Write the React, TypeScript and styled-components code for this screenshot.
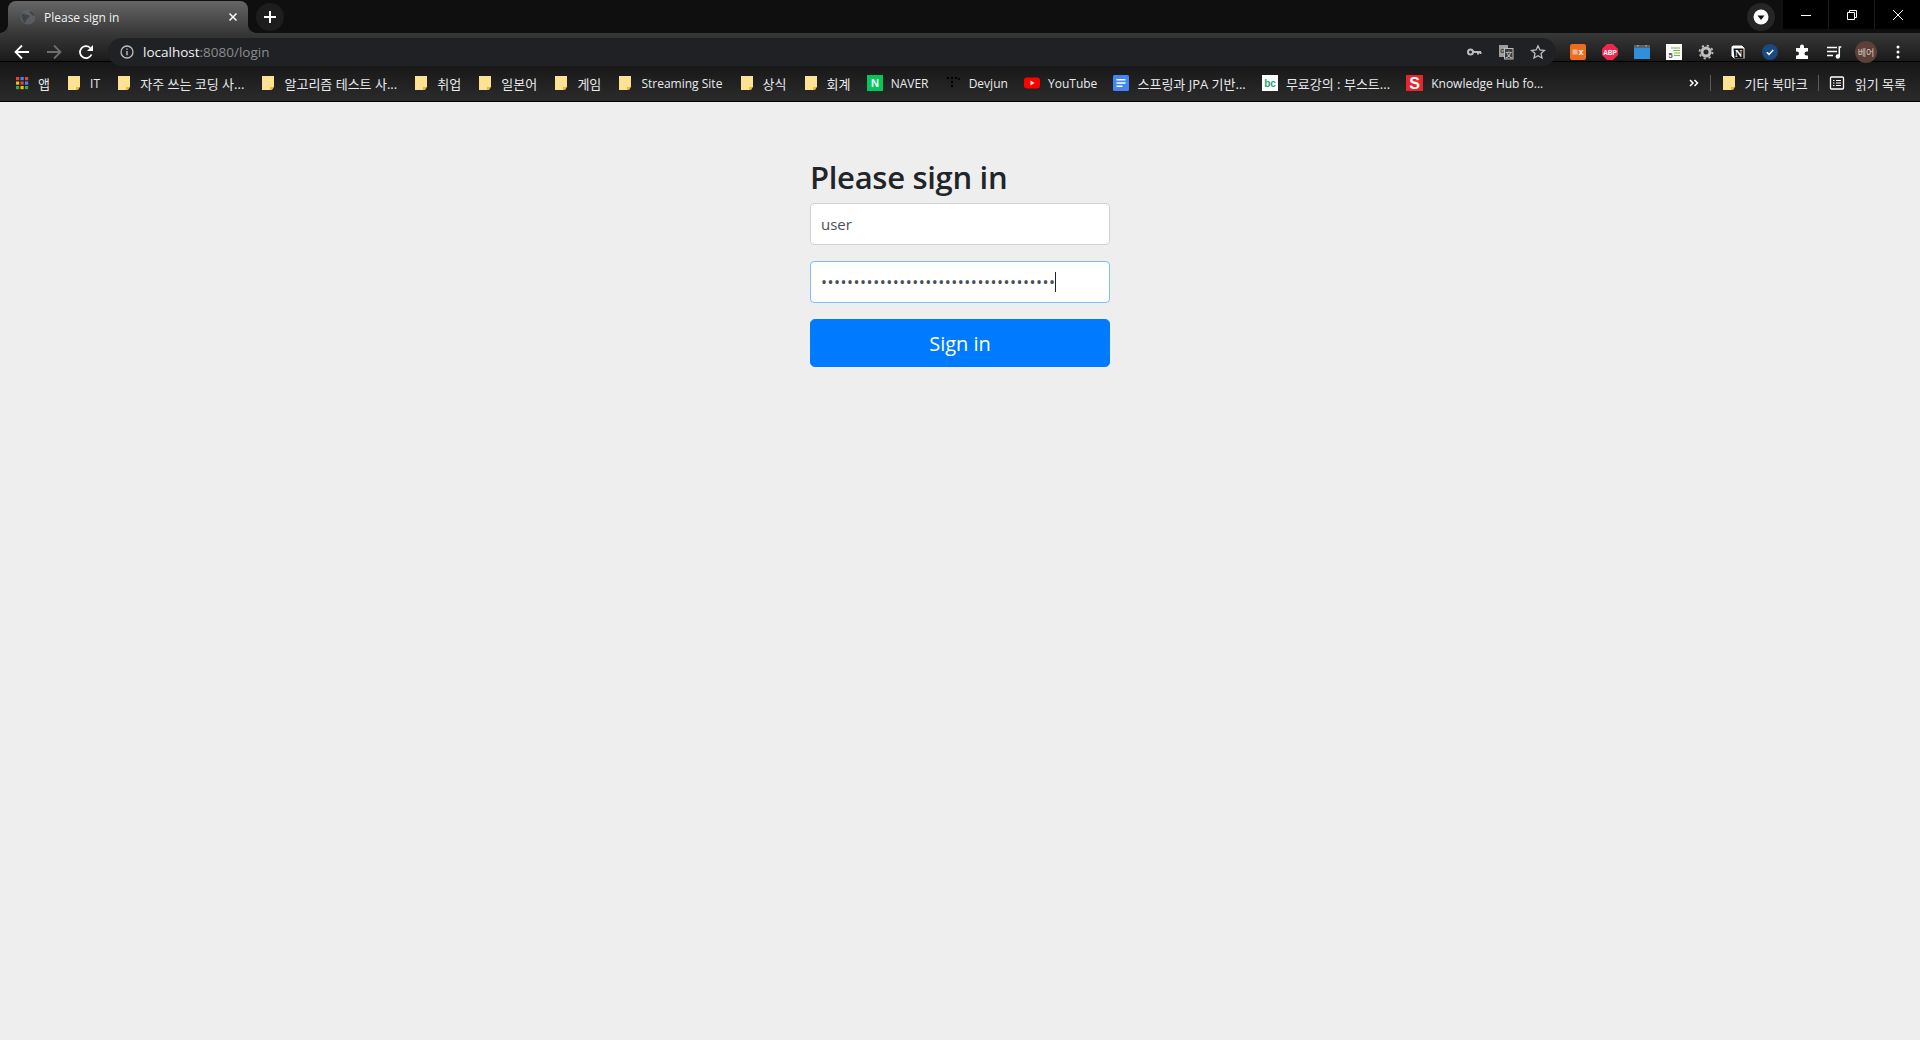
import React from 'react';
import styled, { createGlobalStyle } from 'styled-components';

const UI_FONT = `"Open Sans", "Noto Sans CJK KR", sans-serif`;

const GlobalStyle = createGlobalStyle`
  html, body {
    margin: 0;
    padding: 0;
    background: #eeeeee;
  }
  * {
    box-sizing: border-box;
  }
`;

const bookmarks: { icon: string; label: string }[] = [
  { icon: 'apps', label: '앱' },
  { icon: 'folder', label: 'IT' },
  { icon: 'folder', label: '자주 쓰는 코딩 사...' },
  { icon: 'folder', label: '알고리즘 테스트 사...' },
  { icon: 'folder', label: '취업' },
  { icon: 'folder', label: '일본어' },
  { icon: 'folder', label: '게임' },
  { icon: 'folder', label: 'Streaming Site' },
  { icon: 'folder', label: '상식' },
  { icon: 'folder', label: '회계' },
  { icon: 'naver', label: 'NAVER' },
  { icon: 'devjun', label: 'Devjun' },
  { icon: 'youtube', label: 'YouTube' },
  { icon: 'docs', label: '스프링과 JPA 기반...' },
  { icon: 'bc', label: '무료강의 : 부스트...' },
  { icon: 'slogo', label: 'Knowledge Hub fo...' },
];

const isKorean = (text: string) => /[가-힣]/.test(text);

const FolderIcon = () => (
  <svg width="16" height="16" viewBox="0 0 16 16">
    <path d="M2 1h10v11l-2 3H2z" fill="#fde293" />
    <path d="M10 15v-3h4l-2 3z" fill="#e8b93f" />
    <path d="M12 1h2v11h-2z" fill="#fde293" />
  </svg>
);

const AppsIcon = () => {
  const colors = ['#ea4335', '#4285f4', '#ea4335', '#fbbc04', '#ea4335', '#4285f4', '#34a853', '#fbbc04', '#34a853'];
  return (
    <svg width="16" height="16" viewBox="0 0 16 16">
      {colors.map((c, i) => (
        <rect key={i} x={2 + (i % 3) * 4.5} y={2 + Math.floor(i / 3) * 4.5} width="3.2" height="3.2" fill={c} />
      ))}
    </svg>
  );
};

const BookmarkIcon = ({ kind }: { kind: string }) => {
  switch (kind) {
    case 'apps':
      return <AppsIcon />;
    case 'folder':
      return <FolderIcon />;
    case 'naver':
      return (
        <svg width="16" height="16" viewBox="0 0 16 16">
          <rect width="16" height="16" fill="#03c75a" />
          <IconText x="8" y="12" fontSize="11" fontWeight="800" fill="#fff">N</IconText>
        </svg>
      );
    case 'devjun':
      return (
        <svg width="16" height="16" viewBox="0 0 16 16" fill="#000">
          <circle cx="3" cy="3" r="1.2" />
          <circle cx="7" cy="3" r="1.2" />
          <circle cx="11" cy="3" r="1.2" />
          <circle cx="14" cy="4" r="1" />
          <circle cx="7" cy="7" r="1.2" />
          <circle cx="7" cy="11" r="1.2" />
        </svg>
      );
    case 'youtube':
      return (
        <svg width="16" height="16" viewBox="0 0 16 16">
          <rect x="0" y="2.500" width="16" height="11" rx="3" fill="#f00" />
          <path d="M6.500 5.500v5l4-2.500z" fill="#fff" />
        </svg>
      );
    case 'docs':
      return (
        <svg width="16" height="16" viewBox="0 0 16 16">
          <rect width="16" height="16" rx="1.500" fill="#4285f4" />
          <path d="M3.500 4h9v1.500h-9zM3.500 7.200h9v1.500h-9zM3.500 10.400h6v1.500h-6z" fill="#fff" />
        </svg>
      );
    case 'bc':
      return (
        <svg width="16" height="16" viewBox="0 0 16 16">
          <rect width="16" height="16" fill="#fff" />
          <IconText x="8" y="11.500" fontSize="10" fontWeight="700" fill="#1aa56b">bc</IconText>
        </svg>
      );
    default:
      return (
        <svg width="17" height="16" viewBox="0 0 17 16">
          <rect width="17" height="16" fill="#e5262c" />
          <IconText x="8.500" y="14" fontSize="16" fontWeight="800" fill="#fff">S</IconText>
        </svg>
      );
  }
};

const App: React.FC = () => {
  return (
    <>
      <GlobalStyle />
      <Browser>
        <TitleBar>
          <Tab>
            <TabFavicon>
              <svg width="16" height="16" viewBox="0 0 16 16">
                <circle cx="8" cy="8" r="7.500" fill="#5f6368" />
                <path d="M2 5c3-1 4 1 6 1s2 2 0 3-2 3-3 5C3 12 1 8 2 5zM10 2c2 0 4 2 5 5-2 0-3-1-4-2s-2-2-1-3z" fill="#3c4043" />
              </svg>
            </TabFavicon>
            <TabTitle>Please sign in</TabTitle>
            <TabClose>
              <svg width="10" height="10" viewBox="0 0 10 10">
                <path d="M1.500 1.500l7 7M8.500 1.500l-7 7" stroke="#fff" strokeWidth="1.500" />
              </svg>
            </TabClose>
          </Tab>
          <NewTab>
            <svg width="14" height="14" viewBox="0 0 14 14">
              <path d="M7 1v12M1 7h12" stroke="#fff" strokeWidth="2" />
            </svg>
          </NewTab>
          <TitleRight>
            <ProfileMenu>
              <svg width="16" height="16" viewBox="0 0 16 16">
                <circle cx="8" cy="8" r="7.500" fill="#fff" />
                <path d="M4.500 6.500h7L8 11z" fill="#111" />
              </svg>
            </ProfileMenu>
            <WindowControls>
              <WindowButton>
                <svg width="12" height="12" viewBox="0 0 12 12">
                  <path d="M1 6.500h10" stroke="#fff" />
                </svg>
              </WindowButton>
              <WindowButton>
                <svg width="12" height="12" viewBox="0 0 12 12" fill="none" stroke="#fff">
                  <path d="M1.500 3.500h7v7h-7zM3.500 3.500v-2h7v7h-2" />
                </svg>
              </WindowButton>
              <WindowButton>
                <svg width="12" height="12" viewBox="0 0 12 12">
                  <path d="M1 1l10 10M11 1L1 11" stroke="#fff" />
                </svg>
              </WindowButton>
            </WindowControls>
          </TitleRight>
        </TitleBar>

        <Toolbar>
          <NavButton>
            <svg width="16" height="16" viewBox="0 0 16 16" fill="none" stroke="#fff" strokeWidth="1.800">
              <path d="M15 8H2M8 1.500L1.500 8 8 14.500" />
            </svg>
          </NavButton>
          <NavButton>
            <svg width="16" height="16" viewBox="0 0 16 16" fill="none" stroke="#6e6e6e" strokeWidth="1.800">
              <path d="M1 8h13M8 1.500L14.500 8 8 14.500" />
            </svg>
          </NavButton>
          <NavButton>
            <svg width="16" height="16" viewBox="0 0 16 16" fill="none">
              <path d="M13.500 10.500A6 6 0 1 1 12.200 3.800" stroke="#fff" strokeWidth="1.800" />
              <path d="M15 1v6H9z" fill="#fff" />
            </svg>
          </NavButton>
          <Omnibox>
            <svg width="14" height="14" viewBox="0 0 14 14" fill="none">
              <circle cx="7" cy="7" r="6" stroke="#bdbdbd" strokeWidth="1.300" />
              <path d="M7 6v4.200M7 3.400v1.400" stroke="#bdbdbd" strokeWidth="1.400" />
            </svg>
            <Url>
              localhost<UrlRest>:8080/login</UrlRest>
            </Url>
            <OmniboxActions>
              <svg width="16" height="16" viewBox="0 0 16 16" fill="none">
                <circle cx="4.500" cy="8" r="2.500" stroke="#bdbdbd" strokeWidth="2" />
                <path d="M7 8h8M12 8v2.500M14.500 8v2" stroke="#bdbdbd" strokeWidth="2" />
              </svg>
              <svg width="16" height="16" viewBox="0 0 16 16">
                <rect x="1" y="1" width="9" height="12" fill="#9e9e9e" />
                <IconText x="4.500" y="8.500" fontSize="6" fontWeight="700" fill="#333">G</IconText>
                <rect x="6.500" y="4.500" width="8.500" height="10.500" fill="#3a3b3d" stroke="#bdbdbd" />
                <IconText x="10.700" y="12.500" fontSize="7" fill="#dcdcdc">文</IconText>
              </svg>
              <svg width="16" height="16" viewBox="0 0 16 16" fill="none">
                <path d="M8 1.800l1.900 4.200 4.500.5-3.400 3 1 4.500L8 11.700 4 14l1-4.500-3.400-3 4.500-.5z" stroke="#bdbdbd" strokeWidth="1.300" />
              </svg>
            </OmniboxActions>
          </Omnibox>
          <Extensions>
            <svg width="16" height="16" viewBox="0 0 16 16">
              <rect width="16" height="16" rx="2" fill="#ee6c1f" />
              <rect x="2.500" y="5.500" width="5" height="5" fill="#f6b48b" />
              <IconText x="11" y="11" fontSize="9" fontWeight="800" fill="#fff">x</IconText>
            </svg>
            <svg width="16" height="16" viewBox="0 0 16 16">
              <path d="M5 0h6l5 5v6l-5 5H5l-5-5V5z" fill="#f0274a" />
              <IconText x="8" y="10.500" fontSize="6.500" fontWeight="800" fill="#fff">ABP</IconText>
            </svg>
            <svg width="16" height="16" viewBox="0 0 16 16">
              <rect y="1" width="16" height="14" fill="#2f8fdb" />
              <rect y="1" width="16" height="3" fill="#59626b" />
              <path d="M3 1.800h1.500M11.500 1.800H13" stroke="#b9c1c8" />
            </svg>
            <svg width="16" height="16" viewBox="0 0 16 16">
              <rect width="16" height="16" fill="#fafafa" />
              <path d="M5 4h9M7 6.500h7M8 9h6M8 11.500h6" stroke="#7cb342" strokeWidth="1.200" />
              <IconText x="4.500" y="14" fontSize="7.500" fontWeight="600" fill="#555">5</IconText>
            </svg>
            <svg width="16" height="16" viewBox="0 0 16 16" fill="none">
              <circle cx="8" cy="8" r="4" stroke="#bdbdbd" strokeWidth="3" />
              <circle cx="8" cy="8" r="6.500" stroke="#bdbdbd" strokeWidth="1.800" strokeDasharray="2.200 2.900" />
            </svg>
            <svg width="16" height="16" viewBox="0 0 16 16" fill="none">
              <path d="M3 1h9l3 3v11H4l-3-3V2.500z" fill="#fff" stroke="#222" strokeWidth="1" />
              <path d="M3.500 4.500h10V14.500h-9z" fill="#111" />
              <NotionLetter x="8.500" y="13" fontSize="10" fontWeight="700" fill="#fff">N</NotionLetter>
            </svg>
            <svg width="16" height="16" viewBox="0 0 16 16" fill="none">
              <circle cx="8" cy="8" r="8" fill="#1a4a80" />
              <path d="M4.800 8.200l2.200 2.200 4.200-4.400" stroke="#fff" strokeWidth="1.500" />
            </svg>
            <svg width="16" height="16" viewBox="0 0 16 16">
              <path d="M6 2.500a2 2 0 0 1 4 0V4h4v3.500h-1.500a2 2 0 0 0 0 4H14V15H2v-3.500h1a2 2 0 0 0 0-4H2V4h4z" fill="#fff" />
            </svg>
            <svg width="16" height="16" viewBox="0 0 16 16" fill="none">
              <path d="M1 3.500h10M1 7.500h10M1 11.500h6" stroke="#fff" strokeWidth="1.500" />
              <circle cx="11.800" cy="12.500" r="2.200" fill="#fff" />
              <path d="M13.300 12.500V3h2" stroke="#fff" strokeWidth="1.500" />
            </svg>
            <Avatar>베어</Avatar>
            <svg width="16" height="16" viewBox="0 0 16 16" fill="#fff">
              <circle cx="8" cy="3" r="1.500" />
              <circle cx="8" cy="8" r="1.500" />
              <circle cx="8" cy="13" r="1.500" />
            </svg>
          </Extensions>
        </Toolbar>

        <BookmarkBar>
          {bookmarks.map((b) => (
            <Bookmark key={b.label}>
              <BookmarkIcon kind={b.icon} />
              <BookmarkLabel $korean={isKorean(b.label)}>{b.label}</BookmarkLabel>
            </Bookmark>
          ))}
          <BookmarkRight>
            <svg width="12" height="12" viewBox="0 0 12 12" fill="none" stroke="#fff" strokeWidth="1.500">
              <path d="M2 3l3 3-3 3M6.500 3l3 3-3 3" />
            </svg>
            <BarDivider />
            <Bookmark>
              <FolderIcon />
              <BookmarkLabel $korean>기타 북마크</BookmarkLabel>
            </Bookmark>
            <BarDivider />
            <Bookmark>
              <ReadingIcon width="16" height="16" viewBox="0 0 16 16" fill="none" stroke="#fff">
                <rect x="1.500" y="2" width="13" height="12" rx="1" strokeWidth="1.300" />
                <path d="M4 5.500h1.500M7 5.500h5M4 8h1.500M7 8h5M4 10.500h1.500M7 10.500h5" strokeWidth="1.200" />
              </ReadingIcon>
              <BookmarkLabel $korean>읽기 목록</BookmarkLabel>
            </Bookmark>
          </BookmarkRight>
        </BookmarkBar>
      </Browser>

      <Page>
        <SignInForm>
          <Heading>Please sign in</Heading>
          <Field type="text" defaultValue="user" readOnly />
          <PasswordWrap>
            <PasswordField type="password" defaultValue={'a'.repeat(36)} readOnly />
            <Caret />
          </PasswordWrap>
          <SubmitButton type="button">Sign in</SubmitButton>
        </SignInForm>
      </Page>
    </>
  );
};

export default App;

const Browser = styled.header`
  display: flex;
  flex-direction: column;
  height: 102px;
  font-family: ${UI_FONT};
  color: #fff;
  overflow: hidden;
`;

const IconText = styled.text`
  font-family: "Liberation Sans", "Noto Sans CJK KR", sans-serif;
  text-anchor: middle;
`;

const NotionLetter = styled(IconText)`
  font-family: "Liberation Serif", serif;
`;

const TitleBar = styled.div`
  display: flex;
  align-items: flex-start;
  height: 33px;
  padding-left: 8px;
  background: #0f0f0f;
`;

const Tab = styled.div`
  position: relative;
  display: flex;
  align-items: center;
  width: 240px;
  height: 32px;
  padding: 0 10px 0 12px;
  margin-top: 1px;
  border-radius: 8px 8px 0 0;
  background: linear-gradient(#666666, #383838);

  &::before,
  &::after {
    content: '';
    position: absolute;
    bottom: 0;
    width: 8px;
    height: 8px;
  }

  &::before {
    left: -8px;
    background: radial-gradient(circle at 0 0, transparent 7.5px, #383838 8px);
  }

  &::after {
    right: -8px;
    background: radial-gradient(circle at 100% 0, transparent 7.5px, #383838 8px);
  }
`;

const TabFavicon = styled.span`
  display: flex;
  margin-right: 8px;
  opacity: 0.75;
`;

const TabTitle = styled.span`
  flex: 1;
  font-size: 12px;
  color: #f2f2f2;
`;

const TabClose = styled.span`
  display: flex;
`;

const NewTab = styled.div`
  display: flex;
  align-items: center;
  justify-content: center;
  width: 28px;
  height: 28px;
  margin: 3px 0 0 8px;
  border-radius: 50%;
  background: #1d1d1d;
`;

const TitleRight = styled.div`
  display: flex;
  align-items: flex-start;
  margin-left: auto;
`;

const ProfileMenu = styled.div`
  display: flex;
  align-items: center;
  justify-content: center;
  width: 28px;
  height: 28px;
  margin: 3px 8px 0 0;
  border-radius: 50%;
  background: #262626;
`;

const WindowControls = styled.div`
  display: flex;
  gap: 1px;
  background: #1a1a1a;
`;

const WindowButton = styled.div`
  display: flex;
  align-items: center;
  justify-content: center;
  width: 45px;
  height: 29px;
  background: #000;
`;

/* the omnibox hangs 5px past the bottom edge of the toolbar, over the bookmark bar */
const Toolbar = styled.div`
  position: relative;
  z-index: 1;
  display: flex;
  align-items: flex-start;
  flex: none;
  height: 29px;
  padding: 5px 0 0 6px;
  background: linear-gradient(#383838, #1a1a1a);
  border-bottom: 1px solid #000;
`;

const NavButton = styled.div`
  display: flex;
  align-items: center;
  justify-content: center;
  flex: none;
  width: 32px;
  height: 28px;
`;

const Omnibox = styled.div`
  display: flex;
  align-items: center;
  gap: 10px;
  flex: 1;
  height: 28px;
  margin-left: 6px;
  padding: 0 10px 0 12px;
  border-radius: 14px;
  background: #202124;
`;

const Url = styled.span`
  font-size: 13.5px;
  color: #f1f3f4;
  margin-left: -1px;
`;

const UrlRest = styled.span`
  color: #8a8c90;
`;

const OmniboxActions = styled.div`
  display: flex;
  gap: 16px;
  margin-left: auto;
`;

const Extensions = styled.div`
  display: flex;
  align-items: center;
  gap: 16px;
  height: 28px;
  padding: 0 14px;
`;

const Avatar = styled.span`
  display: flex;
  align-items: center;
  justify-content: center;
  width: 22px;
  height: 22px;
  margin: 0 -3px;
  border-radius: 50%;
  background: #5d4037;
  color: #d7ccc8;
  font-size: 9px;
`;

const BookmarkBar = styled.nav`
  display: flex;
  align-items: center;
  gap: 16.15px;
  flex: 1;
  padding: 3px 14px 0;
  background: linear-gradient(#161616, #2b2b2b);
  border-bottom: 1px solid #000;
`;

const Bookmark = styled.div`
  display: flex;
  align-items: center;
  gap: 8px;
  color: #e8eaed;
  white-space: nowrap;
`;

const BookmarkLabel = styled.span<{ $korean?: boolean }>`
  font-size: ${({ $korean }) => ($korean ? '13px' : '12px')};
`;

const ReadingIcon = styled.svg`
  margin-right: 2px;
`;

const BookmarkRight = styled.div`
  display: flex;
  align-items: center;
  gap: 10px;
  margin-left: auto;
`;

const BarDivider = styled.span`
  width: 1px;
  height: 16px;
  background: #5a5a5a;
`;

const Page = styled.main`
  display: flex;
  justify-content: center;
  min-height: 938px;
  background: #eeeeee;
  font-family: "Open Sans", sans-serif;
`;

const SignInForm = styled.form`
  display: flex;
  flex-direction: column;
  width: 300px;
  padding-top: 56px;
`;

const Heading = styled.h2`
  margin: 0 0 7px;
  font-size: 31px;
  font-weight: 600;
  line-height: 38px;
  letter-spacing: -0.3px;
  color: #212529;
`;

const Field = styled.input`
  display: block;
  width: 100%;
  height: 42px;
  padding: 10px;
  margin-bottom: 16px;
  border: 1px solid #ced4da;
  border-radius: 4px;
  background: #fff;
  color: #495057;
  font-family: inherit;
  font-size: 15px;
  outline: none;
`;

const PasswordWrap = styled.div`
  position: relative;
`;

const PasswordField = styled(Field)`
  border-color: #80bdff;
  font-size: 16px;
  letter-spacing: 0.5px;
`;

const Caret = styled.span`
  position: absolute;
  left: 245px;
  top: 11px;
  width: 1px;
  height: 20px;
  background: #212529;
`;

const SubmitButton = styled.button`
  width: 100%;
  height: 48px;
  border: 1px solid #007bff;
  border-radius: 4.8px;
  background: #007bff;
  color: #fff;
  font-family: inherit;
  font-size: 20px;
  cursor: pointer;
`;
